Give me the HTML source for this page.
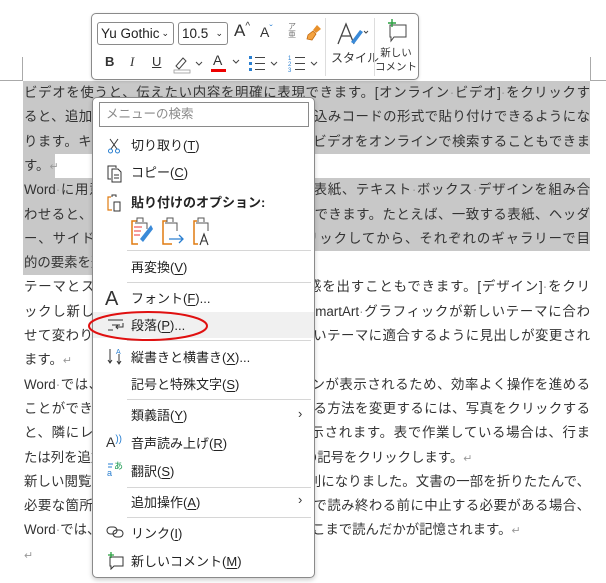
<!DOCTYPE html>
<html><head><meta charset="utf-8"><style>
*{margin:0;padding:0;box-sizing:border-box}
body{width:606px;height:583px;overflow:hidden;background:#fff;position:relative;font-family:"Liberation Sans","Noto Sans CJK JP",sans-serif;color:#333}
.row{position:absolute;left:24px;width:566px;height:24.3px;line-height:24.3px;font-size:13.4px;white-space:nowrap;text-align:justify;text-align-last:justify;text-justify:inter-character}
.row.l{text-align:left;text-align-last:left}
.hl{position:absolute;background:#c8c8c8}
.p{color:#999;font-size:11px}
.d{color:#999}
.tb{position:absolute;left:91px;top:13px;width:328px;height:67px;border:1px solid #8a8a8a;border-radius:5px;background:#fff;box-shadow:0 1px 3px rgba(0,0,0,.15)}
.menu{position:absolute;left:92px;top:97px;width:223px;height:481px;border:1px solid #8a8a8a;border-radius:5px;background:#fff;box-shadow:0 2px 5px rgba(0,0,0,.2)}
.mi{position:absolute;left:38px;font-size:13px;color:#222;white-space:nowrap;line-height:16px}
.sep{position:absolute;left:34px;right:3px;height:1px;background:#d6d6d6}
.ic{position:absolute}
u{text-decoration:underline;text-underline-offset:2px}
</style></head><body>
<div style="position:absolute;left:22px;top:57px;width:1px;height:24px;background:#aaa"></div>
<div style="position:absolute;left:0;top:80px;width:23px;height:1px;background:#aaa"></div>
<div style="position:absolute;left:590px;top:57px;width:1px;height:24px;background:#aaa"></div>
<div style="position:absolute;left:590px;top:80px;width:16px;height:1px;background:#aaa"></div>

<div class="hl" style="left:23px;top:81px;width:567px;height:73px"></div>
<div class="hl" style="left:23px;top:154px;width:32px;height:24px"></div>
<div class="hl" style="left:23px;top:178px;width:567px;height:73px"></div>
<div class="hl" style="left:23px;top:251px;width:200px;height:24px"></div>

<div class="row" style="top:81px">ビデオを使うと、伝えたい内容を明確に表現できます。[オンライン<span class="d">·</span>ビデオ]<span class="d">·</span>をクリックす</div>
<div class="row" style="top:105.3px">ると、追加したいビデオを、それに応じた埋め込みコードの形式で貼り付けできるようにな</div>
<div class="row" style="top:129.6px">ります。キーワードを入力して、文書に最適なビデオをオンラインで検索することもできま</div>
<div class="row l" style="top:153.9px">す。<span class="p">↵</span></div>
<div class="row" style="top:178.2px">Word<span class="d">·</span>に用意されているヘッダー、フッター、表紙、テキスト<span class="d">·</span>ボックス<span class="d">·</span>デザインを組み合</div>
<div class="row" style="top:202.5px">わせると、プロのようなできばえの文書を作成できます。たとえば、一致する表紙、ヘッダ</div>
<div class="row" style="top:226.8px">ー、サイドバーを追加できます。[挿入]をクリックしてから、それぞれのギャラリーで目</div>
<div class="row l" style="top:251.1px">的の要素を選んでください。<span class="p">↵</span></div>
<div class="row" style="top:275.4px">テーマとスタイルを使って、文書全体の統一感を出すこともできます。[デザイン]<span class="d">·</span>をクリ</div>
<div class="row" style="top:299.7px">ックし新しいテーマを選ぶと、図やグラフ、SmartArt<span class="d">·</span>グラフィックが新しいテーマに合わ</div>
<div class="row" style="top:324px">せて変わります。スタイルを適用すると、新しいテーマに適合するように見出しが変更され</div>
<div class="row l" style="top:348.3px">ます。<span class="p">↵</span></div>
<div class="row" style="top:372.6px">Word<span class="d">·</span>では、必要に応じてその場に新しいボタンが表示されるため、効率よく操作を進める</div>
<div class="row" style="top:396.9px">ことができます。文書内に写真をレイアウトする方法を変更するには、写真をクリックする</div>
<div class="row" style="top:421.2px">と、隣にレイアウト<span class="d">·</span>オプションのボタンが表示されます。表で作業している場合は、行ま</div>
<div class="row l" style="top:445.5px">たは列を追加する場所をクリックして、プラスの記号をクリックします。<span class="p">↵</span></div>
<div class="row" style="top:469.8px">新しい閲覧ビューが導入され、閲覧もさらに便利になりました。文書の一部を折りたたんで、</div>
<div class="row" style="top:494.1px">必要な箇所に集中することができます。最後まで読み終わる前に中止する必要がある場合、</div>
<div class="row l" style="top:518.4px">Word<span class="d">·</span>では、たとえ別のデバイスであっても、どこまで読んだかが記憶されます。<span class="p">↵</span></div>
<div class="row l" style="top:542.7px"><span class="p">↵</span></div>

<!-- toolbar -->
<div class="tb">
 <div style="position:absolute;left:5px;top:8px;width:77px;height:23px;border:1px solid #8a8a8a;border-radius:3px;font-size:13.5px;line-height:21px;padding-left:3px;color:#222">Yu Gothic <span style="position:absolute;right:4px;font-size:9px">⌄</span></div>
 <div style="position:absolute;left:86px;top:8px;width:50px;height:23px;border:1px solid #8a8a8a;border-radius:3px;font-size:13.5px;line-height:21px;padding-left:3px;color:#222">10.5<span style="position:absolute;right:4px;font-size:9px">⌄</span></div>
 <div style="position:absolute;left:142px;top:7px;font-size:17px;color:#333">A<span style="font-size:10px;vertical-align:top">^</span></div>
 <div style="position:absolute;left:168px;top:10px;font-size:14px;color:#333">A<span style="font-size:10px;vertical-align:top;color:#3a8ad8">ˇ</span></div>
 <div style="position:absolute;left:196px;top:9px;font-size:8px;color:#777;line-height:8px">ア<br>亜</div>
 <svg class="ic" style="left:213px;top:9px" width="18" height="18"><path d="M12 2l4 4-5 4-3-3z" fill="#e8912c"/><path d="M8 8l3 3-4 6-5-1 1-4z" fill="#f4a340" stroke="#c26a10" stroke-width=".8"/></svg>
 <div style="position:absolute;left:13px;top:40px;font-size:13px;font-weight:bold">B</div>
 <div style="position:absolute;left:38px;top:40px;font-size:13px;font-style:italic;font-family:'Liberation Serif',serif">I</div>
 <div style="position:absolute;left:60px;top:40px;font-size:13px;text-decoration:underline">U</div>
 <svg class="ic" style="left:81px;top:40px" width="30" height="20"><path d="M3 12l7-8 3 3-7 8z" fill="none" stroke="#444"/><rect x="1" y="16" width="16" height="3" fill="#fff" stroke="#999" stroke-width=".8"/><path d="M23 8l3 3 3-3" fill="none" stroke="#444"/></svg>
 <div style="position:absolute;left:121px;top:38px;font-size:14px">A</div>
 <div style="position:absolute;left:119px;top:55px;width:15px;height:3px;background:#e00"></div>
 <svg class="ic" style="left:140px;top:45px" width="8" height="6"><path d="M1 1l3 3 3-3" fill="none" stroke="#444"/></svg>
 <svg class="ic" style="left:156px;top:40px" width="30" height="20"><rect x="1" y="2" width="3" height="3" fill="#2a7fd0"/><rect x="1" y="8" width="3" height="3" fill="#2a7fd0"/><rect x="1" y="14" width="3" height="3" fill="#2a7fd0"/><path d="M7 3.5h10M7 9.5h10M7 15.5h10" stroke="#444"/><path d="M23 8l3 3 3-3" fill="none" stroke="#444"/></svg>
 <svg class="ic" style="left:196px;top:40px" width="30" height="20"><text x="0" y="6" font-size="6" fill="#2a7fd0">1</text><text x="0" y="12" font-size="6" fill="#2a7fd0">2</text><text x="0" y="18" font-size="6" fill="#2a7fd0">3</text><path d="M7 3.5h10M7 9.5h10M7 15.5h10" stroke="#444"/><path d="M23 8l3 3 3-3" fill="none" stroke="#444"/></svg>
 <div style="position:absolute;left:233px;top:4px;width:1px;height:58px;background:#ddd"></div>
 <svg class="ic" style="left:244px;top:8px" width="34" height="26"><path d="M2 22L10 2 18 22M5 14h10" fill="none" stroke="#444" stroke-width="1.3"/><path d="M24 8l-9 12 3 2 9-12z" fill="#3a8ad8"/><path d="M28 9l2 2 2-2" fill="none" stroke="#444"/></svg>
 <div style="position:absolute;left:239px;top:35px;font-size:12px">スタイル</div>
 <div style="position:absolute;left:282px;top:4px;width:1px;height:58px;background:#ddd"></div>
 <svg class="ic" style="left:292px;top:5px" width="26" height="24"><path d="M6 6h16v12H10l-3 4v-4H6z" fill="none" stroke="#444"/><path d="M8 0v8M4 4h8" stroke="#2aa040" stroke-width="1.4"/></svg>
 <div style="position:absolute;left:281px;top:32px;width:46px;font-size:10.5px;line-height:14px;text-align:center;white-space:nowrap">新しい<br>コメント</div>
</div>

<!-- menu -->
<div class="menu">
 <div style="position:absolute;left:6px;top:4px;width:210px;height:25px;border:1px solid #8a8a8a;font-size:12.5px;color:#8a8a8a;line-height:23px;padding-left:6px">メニューの検索</div>
 <svg class="ic" style="left:14px;top:40px" width="14" height="16"><path d="M3 1l7 10M11 1L4 11" stroke="#333"/><circle cx="3.5" cy="13" r="2" fill="none" stroke="#2a7fd0"/><circle cx="10.5" cy="13" r="2" fill="none" stroke="#2a7fd0"/></svg>
 <div class="mi" style="top:40px">切り取り(<u>T</u>)</div>
 <svg class="ic" style="left:14px;top:67px" width="16" height="18"><path d="M4 14H1V1h8v2" fill="none" stroke="#333"/><path d="M5 4h6l3 3v10H5z" fill="none" stroke="#333"/><path d="M7 10h5M7 13h5" stroke="#333"/></svg>
 <div class="mi" style="top:67px">コピー(<u>C</u>)</div>
 <svg class="ic" style="left:14px;top:96px" width="16" height="18"><path d="M4 3H1v13h4" fill="none" stroke="#e07b10" stroke-width="1.2"/><path d="M5 3V1h4v2" fill="none" stroke="#333"/><rect x="7" y="8" width="6" height="9" fill="none" stroke="#333"/></svg>
 <div class="mi" style="top:97px;font-weight:bold">貼り付けのオプション:</div>
 <svg class="ic" style="left:38px;top:119px" width="96" height="30"><path d="M6 4H1v23h6" fill="none" stroke="#e07b10" stroke-width="1.5"/><path d="M6 5V1h6v4M4 6h12v6" fill="none" stroke="#555"/><path d="M3 10h8M3 14h7M3 18h6" stroke="#e33" stroke-width="1"/><path d="M20 8L9 22l3 3 10-13z" fill="#3a8ad8"/>
 <path d="M36 4h-4v23h9" fill="none" stroke="#e07b10" stroke-width="1.5"/><path d="M36 5V1h6v4M34 6h12v8" fill="none" stroke="#555"/><path d="M38 22h14M48 18l4 4-4 4" fill="none" stroke="#2a7fd0" stroke-width="1.3"/>
 <path d="M66 4h-3v23h4" fill="none" stroke="#e07b10" stroke-width="1.5"/><path d="M67 5V1h6v4M65 6h12v8" fill="none" stroke="#555"/><path d="M69 28l4-11 4 11M70.5 24h5" fill="none" stroke="#333" stroke-width="1.1"/></svg>
 <div class="sep" style="top:152px"></div>
 <div class="mi" style="top:162px">再変換(<u>V</u>)</div>
 <div class="sep" style="top:184px"></div>
 <div style="position:absolute;left:12px;top:190px;font-size:20px;color:#333">A</div>
 <div class="mi" style="top:193px">フォント(<u>F</u>)...</div>
 <div style="position:absolute;left:0;top:214px;width:221px;height:26px;background:#f0f0f0"></div>
 <svg class="ic" style="left:14px;top:220px" width="18" height="14"><path d="M1 2h15M5 7h8M1 12h5" stroke="#333"/><path d="M16 5v4h-7M11 7l-2 2 2 2" fill="none" stroke="#333"/></svg>
 <div class="mi" style="top:220px">段落(<u>P</u>)...</div>
 <div class="sep" style="top:242px"></div>
 <svg class="ic" style="left:14px;top:249px" width="18" height="18"><path d="M3 2v14M1 13l2 3 2-3M12 7v10M10 14l2 3 2-3" fill="none" stroke="#333"/><text x="9" y="7" font-size="7" fill="#2a7fd0">A</text></svg>
 <div class="mi" style="top:252px">縦書きと横書き(<u>X</u>)...</div>
 <div class="mi" style="top:279px">記号と特殊文字(<u>S</u>)</div>
 <div class="sep" style="top:301px"></div>
 <div class="mi" style="top:310px">類義語(<u>Y</u>)</div>
 <div style="position:absolute;left:205px;top:308px;font-size:13px">›</div>
 <div style="position:absolute;left:13px;top:336px;font-size:14px;color:#333">A<span style="font-size:10px;color:#2a7fd0;vertical-align:top">))</span></div>
 <div class="mi" style="top:338px">音声読み上げ(<u>R</u>)</div>
 <svg class="ic" style="left:14px;top:362px" width="18" height="18"><text x="0" y="16" font-size="9" fill="#2a7fd0">a</text><text x="7" y="9" font-size="9" fill="#1a9a50">あ</text><path d="M1 4h5M1 7h4" stroke="#2a7fd0"/></svg>
 <div class="mi" style="top:366px">翻訳(<u>S</u>)</div>
 <div class="sep" style="top:389px"></div>
 <div class="mi" style="top:397px">追加操作(<u>A</u>)</div>
 <div style="position:absolute;left:205px;top:394px;font-size:13px">›</div>
 <div class="sep" style="top:419px"></div>
 <svg class="ic" style="left:13px;top:428px" width="20" height="12"><rect x="1" y="1" width="10" height="7" rx="3.5" fill="none" stroke="#333"/><rect x="7" y="4" width="10" height="7" rx="3.5" fill="none" stroke="#333"/></svg>
 <div class="mi" style="top:428px">リンク(<u>I</u>)</div>
 <svg class="ic" style="left:13px;top:454px" width="20" height="18"><path d="M4 5h13v9H8l-3 3v-3H4z" fill="none" stroke="#333"/><path d="M5 0v6M2 3h6" stroke="#2aa040" stroke-width="1.3"/></svg>
 <div class="mi" style="top:456px">新しいコメント(<u>M</u>)</div>
</div>

<svg class="ic" style="left:86px;top:308px" width="126" height="36"><ellipse cx="62" cy="18" rx="59" ry="14" fill="none" stroke="#e01010" stroke-width="2"/></svg>
</body></html>
